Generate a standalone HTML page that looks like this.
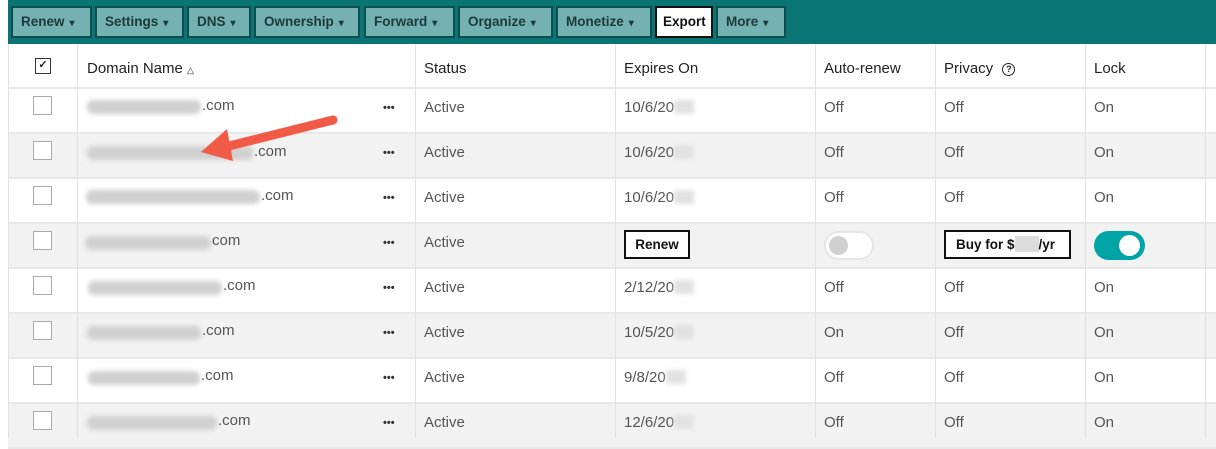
<!DOCTYPE html><html><head><style>
*{box-sizing:border-box;margin:0;padding:0}
body{width:1216px;height:438px;overflow:hidden;background:#fff;font-family:"Liberation Sans",sans-serif;color:#555;position:relative}
.tb{position:absolute;left:8px;top:0;width:1208px;height:44px;background:#0b7575}
.b{position:absolute;top:6px;height:32px;background:#74b1b1;border:2px solid #0a4e4e;font-size:13.5px;font-weight:bold;color:#1d3a3a;padding:0 0 0 8px;line-height:28px;white-space:nowrap}
.b.e{background:#fff;border-color:#111;color:#111;padding-left:6px}
.b i{font-style:normal;font-size:10px;margin-left:5px}
.row{position:absolute;left:8px;width:1208px;height:45px;border-bottom:2px solid #e8e8e8}
.g{background:#f2f2f2}
.v{position:absolute;top:44px;width:1px;height:394px;background:#e2e2e2}
.t{position:absolute;font-size:15px;line-height:18px}
.cb{position:absolute;left:33px;width:19px;height:19px;border:1px solid #aaa;background:#fff}
.bl{position:absolute;height:14px;background:#d0d0d0;filter:blur(2.5px);border-radius:6px}
.yr{display:inline-block;width:20px;height:14px;background:#e2e2e2;filter:blur(2px);vertical-align:-2px}
.dots{position:absolute;left:383px;font-size:11px;font-weight:bold;color:#333}
</style></head><body>
<div class="tb"></div>
<div class="b" style="left:11px;width:81px">Renew<i>▾</i></div>
<div class="b" style="left:95px;width:89px">Settings<i>▾</i></div>
<div class="b" style="left:187px;width:64px">DNS<i>▾</i></div>
<div class="b" style="left:254px;width:106px">Ownership<i>▾</i></div>
<div class="b" style="left:364px;width:91px">Forward<i>▾</i></div>
<div class="b" style="left:458px;width:95px">Organize<i>▾</i></div>
<div class="b" style="left:556px;width:96px">Monetize<i>▾</i></div>
<div class="b e" style="left:655px;width:58px">Export</div>
<div class="b" style="left:716px;width:70px">More<i>▾</i></div>

<div class="row" style="top:44px;height:45px"></div>
<div class="row" style="top:89px"></div>
<div class="row g" style="top:134px"></div>
<div class="row" style="top:179px"></div>
<div class="row g" style="top:224px"></div>
<div class="row" style="top:269px"></div>
<div class="row g" style="top:314px"></div>
<div class="row" style="top:359px"></div>
<div class="row g" style="top:404px"></div>
<div class="v" style="left:8px"></div>
<div class="v" style="left:77px"></div>
<div class="v" style="left:415px"></div>
<div class="v" style="left:615px"></div>
<div class="v" style="left:815px"></div>
<div class="v" style="left:935px"></div>
<div class="v" style="left:1085px"></div>
<div class="v" style="left:1205px"></div>

<div style="position:absolute;left:35px;top:58px;width:16px;height:16px;border:1.5px solid #333;font-size:11px;line-height:13px;text-align:center;font-weight:bold;color:#222">✓</div>
<div class="t" style="left:87px;top:60px;color:#222">Domain Name <span style="font-size:9px">△</span></div>
<div class="t" style="left:424px;top:60px;color:#222">Status</div>
<div class="t" style="left:624px;top:60px;color:#222">Expires On</div>
<div class="t" style="left:824px;top:60px;color:#222">Auto-renew</div>
<div class="t" style="left:944px;top:60px;color:#222">Privacy <span style="display:inline-block;width:13px;height:13px;border:1.5px solid #222;border-radius:50%;font-size:9px;line-height:10px;text-align:center;margin-left:5px;vertical-align:1px;font-weight:bold">?</span></div>
<div class="t" style="left:1094px;top:60px;color:#222">Lock</div>

<div class="cb" style="top:96px"></div><div class="bl" style="left:87px;top:100px;width:114px"></div><div class="t" style="left:202px;top:97px">.com</div><div class="dots" style="top:102px">•••</div>
<div class="cb" style="top:141px"></div><div class="bl" style="left:87px;top:146px;width:166px"></div><div class="t" style="left:254px;top:143px">.com</div><div class="dots" style="top:147px">•••</div>
<div class="cb" style="top:186px"></div><div class="bl" style="left:86px;top:190px;width:174px"></div><div class="t" style="left:261px;top:187px">.com</div><div class="dots" style="top:192px">•••</div>
<div class="cb" style="top:231px"></div><div class="bl" style="left:85px;top:236px;width:126px"></div><div class="t" style="left:212px;top:232px">com</div><div class="dots" style="top:237px">•••</div>
<div class="cb" style="top:276px"></div><div class="bl" style="left:88px;top:281px;width:134px"></div><div class="t" style="left:223px;top:277px">.com</div><div class="dots" style="top:282px">•••</div>
<div class="cb" style="top:321px"></div><div class="bl" style="left:87px;top:326px;width:114px"></div><div class="t" style="left:202px;top:322px">.com</div><div class="dots" style="top:327px">•••</div>
<div class="cb" style="top:366px"></div><div class="bl" style="left:88px;top:371px;width:112px"></div><div class="t" style="left:201px;top:367px">.com</div><div class="dots" style="top:372px">•••</div>
<div class="cb" style="top:411px"></div><div class="bl" style="left:87px;top:416px;width:130px"></div><div class="t" style="left:218px;top:412px">.com</div><div class="dots" style="top:417px">•••</div>

<div class="t" style="left:424px;top:99px">Active</div><div class="t" style="left:624px;top:99px">10/6/20<span class="yr"></span></div><div class="t" style="left:824px;top:99px">Off</div><div class="t" style="left:944px;top:99px">Off</div><div class="t" style="left:1094px;top:99px">On</div>
<div class="t" style="left:424px;top:144px">Active</div><div class="t" style="left:624px;top:144px">10/6/20<span class="yr"></span></div><div class="t" style="left:824px;top:144px">Off</div><div class="t" style="left:944px;top:144px">Off</div><div class="t" style="left:1094px;top:144px">On</div>
<div class="t" style="left:424px;top:189px">Active</div><div class="t" style="left:624px;top:189px">10/6/20<span class="yr"></span></div><div class="t" style="left:824px;top:189px">Off</div><div class="t" style="left:944px;top:189px">Off</div><div class="t" style="left:1094px;top:189px">On</div>
<div class="t" style="left:424px;top:234px">Active</div>
<div style="position:absolute;left:624px;top:230px;width:66px;height:29px;border:2px solid #111;background:#fff;font-size:13.5px;font-weight:bold;color:#111;text-align:center;line-height:25px">Renew</div>
<div style="position:absolute;left:824px;top:231px;width:50px;height:29px;border:2px solid #e6e6e6;border-radius:15px;background:#fff"><div style="position:absolute;left:3px;top:3px;width:19px;height:19px;border-radius:50%;background:#d0d0d0"></div></div>
<div style="position:absolute;left:944px;top:230px;width:127px;height:29px;border:2px solid #111;background:#fff;font-size:13.5px;font-weight:bold;color:#111;line-height:25px;padding-left:10px">Buy for $<span style="display:inline-block;width:24px;height:16px;background:#ddd;vertical-align:-3px"></span>/yr</div>
<div style="position:absolute;left:1094px;top:231px;width:51px;height:29px;border-radius:15px;background:#00a4a6"><div style="position:absolute;left:25px;top:4px;width:21px;height:21px;border-radius:50%;background:#fff"></div></div>
<div class="t" style="left:424px;top:279px">Active</div><div class="t" style="left:624px;top:279px">2/12/20<span class="yr"></span></div><div class="t" style="left:824px;top:279px">Off</div><div class="t" style="left:944px;top:279px">Off</div><div class="t" style="left:1094px;top:279px">On</div>
<div class="t" style="left:424px;top:324px">Active</div><div class="t" style="left:624px;top:324px">10/5/20<span class="yr"></span></div><div class="t" style="left:824px;top:324px">On</div><div class="t" style="left:944px;top:324px">Off</div><div class="t" style="left:1094px;top:324px">On</div>
<div class="t" style="left:424px;top:369px">Active</div><div class="t" style="left:624px;top:369px">9/8/20<span class="yr"></span></div><div class="t" style="left:824px;top:369px">Off</div><div class="t" style="left:944px;top:369px">Off</div><div class="t" style="left:1094px;top:369px">On</div>
<div class="t" style="left:424px;top:414px">Active</div><div class="t" style="left:624px;top:414px">12/6/20<span class="yr"></span></div><div class="t" style="left:824px;top:414px">Off</div><div class="t" style="left:944px;top:414px">Off</div><div class="t" style="left:1094px;top:414px">On</div>

<svg style="position:absolute;left:0;top:0" width="1216" height="438">
<line x1="333" y1="120" x2="225" y2="147" stroke="#f15a47" stroke-width="9" stroke-linecap="round"/>
<polygon points="201,152 227,129 233,161" fill="#f15a47"/>
</svg>
</body></html>
